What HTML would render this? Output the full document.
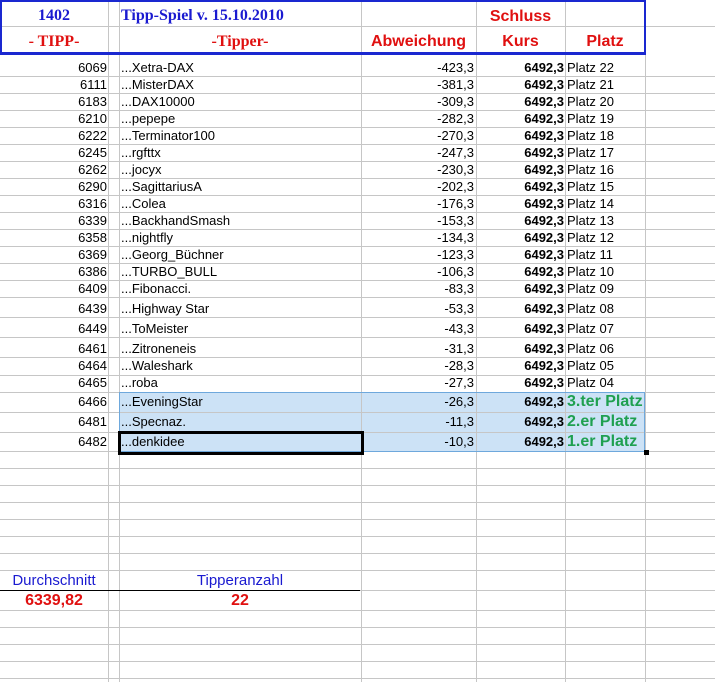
<!DOCTYPE html><html><head><meta charset="utf-8"><style>
body{margin:0;width:715px;height:682px;overflow:hidden;background:#fff;font-family:"Liberation Sans",Arial,sans-serif;position:relative}
.h{position:absolute;left:0;width:715px;height:1px;background:#c6c6c6}
.v{position:absolute;top:0;height:682px;width:1px;background:#c6c6c6}
.c{position:absolute;font-size:13px;line-height:14px;white-space:nowrap;color:#000}
.r{text-align:right}
.b{font-weight:bold}
.t{font-family:"Liberation Serif",serif;font-weight:bold;font-size:16px;line-height:18px;position:absolute;white-space:nowrap;text-align:center}
.a{font-weight:bold;font-size:16px;line-height:18px;position:absolute;white-space:nowrap;text-align:center;color:#e01010}
.g{position:absolute;color:#1fa050;font-weight:bold;font-size:16px;line-height:17px;white-space:nowrap}
</style></head><body>
<div style="position:absolute;left:119px;top:392px;width:526px;height:60px;background:#cce2f6"></div>
<div class="h" style="top:26px"></div>
<div class="h" style="top:76px"></div><div class="h" style="top:93px"></div><div class="h" style="top:110px"></div><div class="h" style="top:127px"></div><div class="h" style="top:144px"></div><div class="h" style="top:161px"></div><div class="h" style="top:178px"></div><div class="h" style="top:195px"></div><div class="h" style="top:212px"></div><div class="h" style="top:229px"></div><div class="h" style="top:246px"></div><div class="h" style="top:263px"></div><div class="h" style="top:280px"></div><div class="h" style="top:297px"></div><div class="h" style="top:317px"></div><div class="h" style="top:337px"></div><div class="h" style="top:357px"></div><div class="h" style="top:375px"></div><div class="h" style="top:392px"></div><div class="h" style="top:412px"></div><div class="h" style="top:432px"></div><div class="h" style="top:451px"></div><div class="h" style="top:468px"></div><div class="h" style="top:485px"></div><div class="h" style="top:502px"></div><div class="h" style="top:519px"></div><div class="h" style="top:536px"></div><div class="h" style="top:553px"></div><div class="h" style="top:570px"></div><div class="h" style="top:590px"></div><div class="h" style="top:610px"></div><div class="h" style="top:627px"></div><div class="h" style="top:644px"></div><div class="h" style="top:661px"></div><div class="h" style="top:678px"></div>
<div class="v" style="left:108px"></div><div class="v" style="left:119px"></div><div class="v" style="left:361px"></div><div class="v" style="left:476px"></div><div class="v" style="left:565px"></div><div class="v" style="left:645px"></div>
<div style="position:absolute;left:119px;top:392px;width:524px;height:58px;border:1px solid #6ea8dc"></div>
<div style="position:absolute;left:118px;top:431px;width:240px;height:18px;border:3px solid #000"></div>
<div style="position:absolute;left:644px;top:450px;width:5px;height:5px;background:#000"></div>
<div style="position:absolute;left:0;top:0;width:642px;height:50px;border:2px solid #1a28d0;border-bottom-width:3px"></div>
<div style="position:absolute;left:0;top:590px;width:360px;height:1px;background:#000"></div>

<div class="t" style="left:0;width:108px;top:7px;color:#1a1ad0">1402</div>
<div class="t" style="left:121px;top:7px;color:#1a1ad0;text-align:left">Tipp-Spiel v. 15.10.2010</div>
<div class="t" style="left:0;width:108px;top:33px;color:#e01010">- TIPP-</div>
<div class="t" style="left:119px;width:242px;top:33px;color:#e01010">-Tipper-</div>
<div class="a" style="left:476px;width:89px;top:8px">Schluss</div>
<div class="a" style="left:361px;width:115px;top:33px">Abweichung</div>
<div class="a" style="left:476px;width:89px;top:33px">Kurs</div>
<div class="a" style="left:565px;width:80px;top:33px">Platz</div>

<div class="c r" style="left:0;width:107px;top:61px">6069</div><div class="c" style="left:121px;top:61px">...Xetra-DAX</div><div class="c r" style="left:361px;width:113px;top:61px">-423,3</div><div class="c r b" style="left:476px;width:88px;top:61px">6492,3</div><div class="c" style="left:567px;top:61px">Platz 22</div>
<div class="c r" style="left:0;width:107px;top:78px">6111</div><div class="c" style="left:121px;top:78px">...MisterDAX</div><div class="c r" style="left:361px;width:113px;top:78px">-381,3</div><div class="c r b" style="left:476px;width:88px;top:78px">6492,3</div><div class="c" style="left:567px;top:78px">Platz 21</div>
<div class="c r" style="left:0;width:107px;top:95px">6183</div><div class="c" style="left:121px;top:95px">...DAX10000</div><div class="c r" style="left:361px;width:113px;top:95px">-309,3</div><div class="c r b" style="left:476px;width:88px;top:95px">6492,3</div><div class="c" style="left:567px;top:95px">Platz 20</div>
<div class="c r" style="left:0;width:107px;top:112px">6210</div><div class="c" style="left:121px;top:112px">...pepepe</div><div class="c r" style="left:361px;width:113px;top:112px">-282,3</div><div class="c r b" style="left:476px;width:88px;top:112px">6492,3</div><div class="c" style="left:567px;top:112px">Platz 19</div>
<div class="c r" style="left:0;width:107px;top:129px">6222</div><div class="c" style="left:121px;top:129px">...Terminator100</div><div class="c r" style="left:361px;width:113px;top:129px">-270,3</div><div class="c r b" style="left:476px;width:88px;top:129px">6492,3</div><div class="c" style="left:567px;top:129px">Platz 18</div>
<div class="c r" style="left:0;width:107px;top:146px">6245</div><div class="c" style="left:121px;top:146px">...rgfttx</div><div class="c r" style="left:361px;width:113px;top:146px">-247,3</div><div class="c r b" style="left:476px;width:88px;top:146px">6492,3</div><div class="c" style="left:567px;top:146px">Platz 17</div>
<div class="c r" style="left:0;width:107px;top:163px">6262</div><div class="c" style="left:121px;top:163px">...jocyx</div><div class="c r" style="left:361px;width:113px;top:163px">-230,3</div><div class="c r b" style="left:476px;width:88px;top:163px">6492,3</div><div class="c" style="left:567px;top:163px">Platz 16</div>
<div class="c r" style="left:0;width:107px;top:180px">6290</div><div class="c" style="left:121px;top:180px">...SagittariusA</div><div class="c r" style="left:361px;width:113px;top:180px">-202,3</div><div class="c r b" style="left:476px;width:88px;top:180px">6492,3</div><div class="c" style="left:567px;top:180px">Platz 15</div>
<div class="c r" style="left:0;width:107px;top:197px">6316</div><div class="c" style="left:121px;top:197px">...Colea</div><div class="c r" style="left:361px;width:113px;top:197px">-176,3</div><div class="c r b" style="left:476px;width:88px;top:197px">6492,3</div><div class="c" style="left:567px;top:197px">Platz 14</div>
<div class="c r" style="left:0;width:107px;top:214px">6339</div><div class="c" style="left:121px;top:214px">...BackhandSmash</div><div class="c r" style="left:361px;width:113px;top:214px">-153,3</div><div class="c r b" style="left:476px;width:88px;top:214px">6492,3</div><div class="c" style="left:567px;top:214px">Platz 13</div>
<div class="c r" style="left:0;width:107px;top:231px">6358</div><div class="c" style="left:121px;top:231px">...nightfly</div><div class="c r" style="left:361px;width:113px;top:231px">-134,3</div><div class="c r b" style="left:476px;width:88px;top:231px">6492,3</div><div class="c" style="left:567px;top:231px">Platz 12</div>
<div class="c r" style="left:0;width:107px;top:248px">6369</div><div class="c" style="left:121px;top:248px">...Georg_Büchner</div><div class="c r" style="left:361px;width:113px;top:248px">-123,3</div><div class="c r b" style="left:476px;width:88px;top:248px">6492,3</div><div class="c" style="left:567px;top:248px">Platz 11</div>
<div class="c r" style="left:0;width:107px;top:265px">6386</div><div class="c" style="left:121px;top:265px">...TURBO_BULL</div><div class="c r" style="left:361px;width:113px;top:265px">-106,3</div><div class="c r b" style="left:476px;width:88px;top:265px">6492,3</div><div class="c" style="left:567px;top:265px">Platz 10</div>
<div class="c r" style="left:0;width:107px;top:282px">6409</div><div class="c" style="left:121px;top:282px">...Fibonacci.</div><div class="c r" style="left:361px;width:113px;top:282px">-83,3</div><div class="c r b" style="left:476px;width:88px;top:282px">6492,3</div><div class="c" style="left:567px;top:282px">Platz 09</div>
<div class="c r" style="left:0;width:107px;top:302px">6439</div><div class="c" style="left:121px;top:302px">...Highway Star</div><div class="c r" style="left:361px;width:113px;top:302px">-53,3</div><div class="c r b" style="left:476px;width:88px;top:302px">6492,3</div><div class="c" style="left:567px;top:302px">Platz 08</div>
<div class="c r" style="left:0;width:107px;top:322px">6449</div><div class="c" style="left:121px;top:322px">...ToMeister</div><div class="c r" style="left:361px;width:113px;top:322px">-43,3</div><div class="c r b" style="left:476px;width:88px;top:322px">6492,3</div><div class="c" style="left:567px;top:322px">Platz 07</div>
<div class="c r" style="left:0;width:107px;top:342px">6461</div><div class="c" style="left:121px;top:342px">...Zitroneneis</div><div class="c r" style="left:361px;width:113px;top:342px">-31,3</div><div class="c r b" style="left:476px;width:88px;top:342px">6492,3</div><div class="c" style="left:567px;top:342px">Platz 06</div>
<div class="c r" style="left:0;width:107px;top:359px">6464</div><div class="c" style="left:121px;top:359px">...Waleshark</div><div class="c r" style="left:361px;width:113px;top:359px">-28,3</div><div class="c r b" style="left:476px;width:88px;top:359px">6492,3</div><div class="c" style="left:567px;top:359px">Platz 05</div>
<div class="c r" style="left:0;width:107px;top:376px">6465</div><div class="c" style="left:121px;top:376px">...roba</div><div class="c r" style="left:361px;width:113px;top:376px">-27,3</div><div class="c r b" style="left:476px;width:88px;top:376px">6492,3</div><div class="c" style="left:567px;top:376px">Platz 04</div>
<div class="c r" style="left:0;width:107px;top:395px">6466</div><div class="c" style="left:121px;top:395px">...EveningStar</div><div class="c r" style="left:361px;width:113px;top:395px">-26,3</div><div class="c r b" style="left:476px;width:88px;top:395px">6492,3</div><div class="g" style="left:567px;top:393px">3.ter Platz</div>
<div class="c r" style="left:0;width:107px;top:415px">6481</div><div class="c" style="left:121px;top:415px">...Specnaz.</div><div class="c r" style="left:361px;width:113px;top:415px">-11,3</div><div class="c r b" style="left:476px;width:88px;top:415px">6492,3</div><div class="g" style="left:567px;top:413px">2.er Platz</div>
<div class="c r" style="left:0;width:107px;top:435px">6482</div><div class="c" style="left:121px;top:435px">...denkidee</div><div class="c r" style="left:361px;width:113px;top:435px">-10,3</div><div class="c r b" style="left:476px;width:88px;top:435px">6492,3</div><div class="g" style="left:567px;top:433px">1.er Platz</div>

<div style="position:absolute;left:0;width:108px;top:572px;text-align:center;color:#1a1ad0;font-size:15px;line-height:17px">Durchschnitt</div>
<div style="position:absolute;left:119px;width:242px;top:572px;text-align:center;color:#1a1ad0;font-size:15px;line-height:17px">Tipperanzahl</div>
<div class="a" style="left:0;width:108px;top:592px">6339,82</div>
<div class="a" style="left:119px;width:242px;top:592px">22</div>
</body></html>
